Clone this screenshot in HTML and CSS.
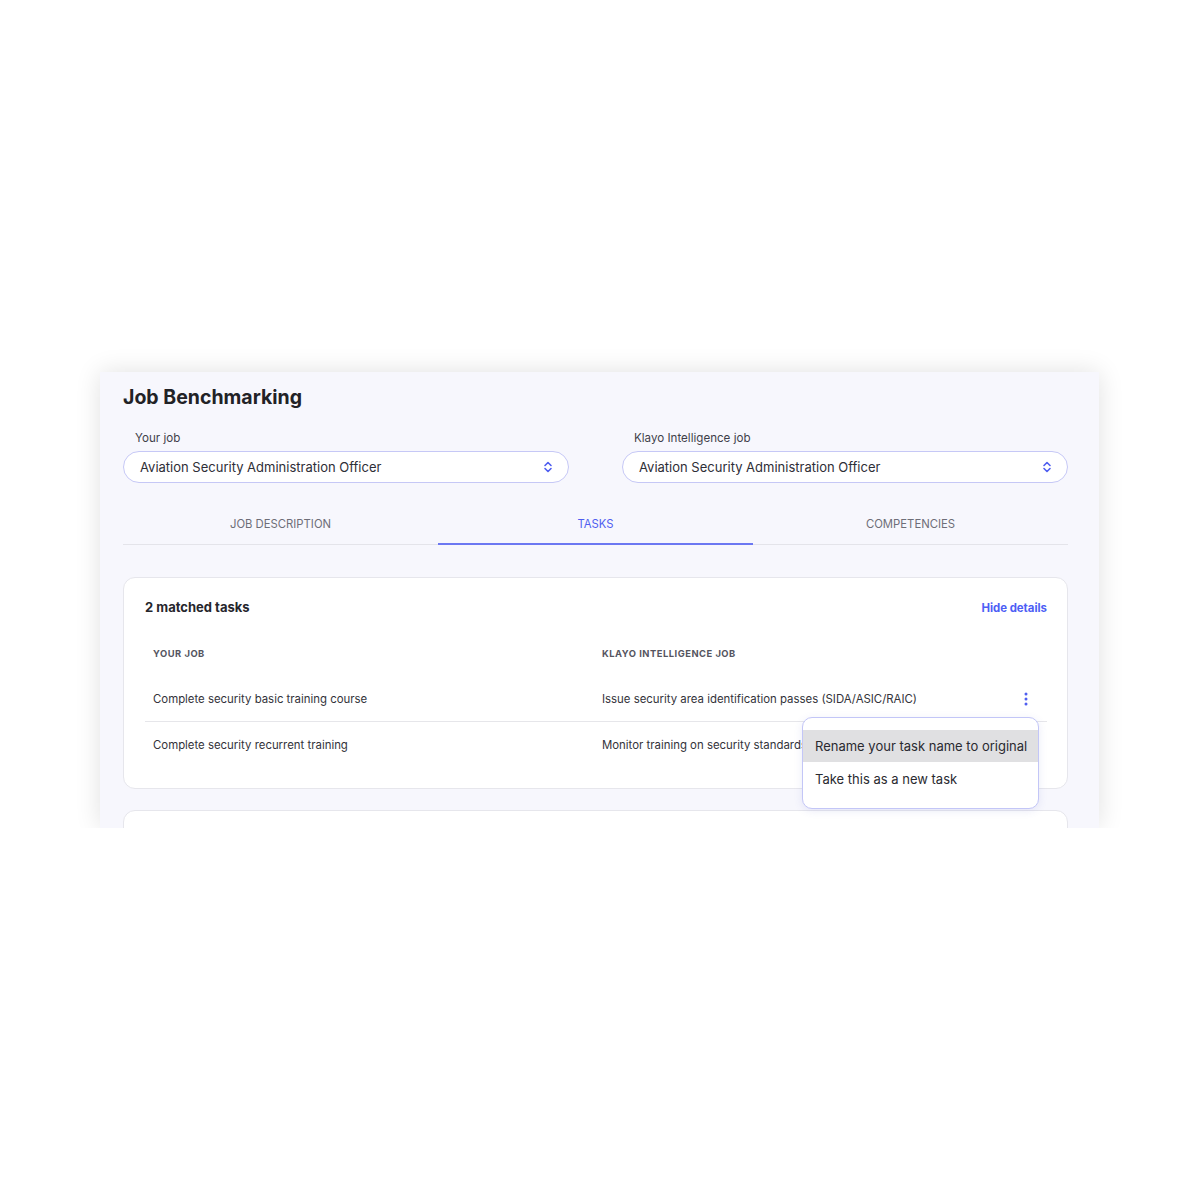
FILE: index.html
```html
<!DOCTYPE html>
<html lang="en">
<head>
<meta charset="utf-8">
<title>Job Benchmarking</title>
<link rel="stylesheet" href="styles.css">
</head>
<body>
<div class="panel">
  <h1 class="title">Job Benchmarking</h1>
  <div class="selects">
    <div class="field">
      <label class="field-label">Your job</label>
      <div class="select">
        <span>Aviation Security Administration Officer</span>
        <svg class="chev" width="10" height="12" viewBox="0 0 10 12"><path d="M2 4.5 L5 1.5 L8 4.5 M2 7.5 L5 10.5 L8 7.5" fill="none" stroke="#4f5ef0" stroke-width="1.6" stroke-linecap="round" stroke-linejoin="round"/></svg>
      </div>
    </div>
    <div class="field">
      <label class="field-label">Klayo Intelligence job</label>
      <div class="select">
        <span>Aviation Security Administration Officer</span>
        <svg class="chev" width="10" height="12" viewBox="0 0 10 12"><path d="M2 4.5 L5 1.5 L8 4.5 M2 7.5 L5 10.5 L8 7.5" fill="none" stroke="#4f5ef0" stroke-width="1.6" stroke-linecap="round" stroke-linejoin="round"/></svg>
      </div>
    </div>
  </div>
  <div class="tabs">
    <div class="tab">JOB DESCRIPTION</div>
    <div class="tab active">TASKS</div>
    <div class="tab">COMPETENCIES</div>
  </div>
  <div class="card">
    <div class="card-head">
      <span class="card-title">2 matched tasks</span>
      <span class="hide-link">Hide details</span>
    </div>
    <div class="table">
      <div class="row head">
        <div class="cell">YOUR JOB</div>
        <div class="cell">KLAYO INTELLIGENCE JOB</div>
      </div>
      <div class="row divided">
        <div class="cell">Complete security basic training course</div>
        <div class="cell cell-action">
          <span>Issue security area identification passes (SIDA/ASIC/RAIC)</span>
          <svg class="kebab" width="4" height="14" viewBox="0 0 4 14"><circle cx="2" cy="2" r="1.5" fill="#4f5ef0"/><circle cx="2" cy="7" r="1.5" fill="#4f5ef0"/><circle cx="2" cy="12" r="1.5" fill="#4f5ef0"/></svg>
        </div>
      </div>
      <div class="row">
        <div class="cell">Complete security recurrent training</div>
        <div class="cell">Monitor training on security standards</div>
      </div>
      <div class="menu">
        <div class="menu-item selected">Rename your task name to original</div>
        <div class="menu-item">Take this as a new task</div>
      </div>
    </div>
  </div>
  <div class="card card-next"></div>
</div>
</body>
</html>
```

FILE: styles.css
```css
* { box-sizing: border-box; }
html, body { margin: 0; padding: 0; background: #ffffff; }
body {
  font-family: Inter, "Noto Sans", "Liberation Sans", sans-serif;
  color: #2b2b33;
}
.panel {
  margin: 372px 0 0 100px;
  width: 999px;
  height: 456px;
  overflow: hidden;
  background: #f7f7fd;
  padding: 13px 31px 0 23px;
  box-shadow: 0 0 24px rgba(0, 0, 0, 0.12);
}
.title {
  margin: 0;
  font-size: 19.5px;
  line-height: 24px;
  font-weight: 700;
  color: #222226;
}
.selects {
  display: flex;
  gap: 53px;
  margin-top: 21px;
}
.field { flex: 1; }
.field-label {
  display: block;
  font-size: 11.6px;
  line-height: 16px;
  color: #3f3f4a;
  padding-left: 12px;
  margin-bottom: 5px;
}
.select {
  height: 32px;
  border: 1px solid #c6c8f6;
  border-radius: 16px;
  background: #ffffff;
  display: flex;
  align-items: center;
  justify-content: space-between;
  padding: 0 15px 0 16px;
  font-size: 13px;
  color: #2e2e36;
}
.chev { display: block; }
.tabs {
  display: flex;
  margin-top: 21px;
  box-shadow: inset 0 -1px 0 #e4e4ea;
}
.tab {
  flex: 1;
  text-align: center;
  font-size: 11.3px;
  line-height: 16px;
  padding: 12px 0 11px;
  color: #6e6e78;
  border-bottom: 2px solid transparent;
}
.tab.active {
  color: #4f5ef0;
  border-bottom-color: #6c78f2;
}
.card {
  margin-top: 32px;
  background: #ffffff;
  border: 1px solid #e6e6ec;
  border-radius: 12px;
  padding: 21px 20px 20px 21px;
}
.card-head {
  display: flex;
  justify-content: space-between;
  align-items: center;
}
.card-title {
  font-size: 13px;
  line-height: 16px;
  font-weight: 700;
  color: #26262c;
}
.hide-link {
  font-size: 11.4px;
  font-weight: 700;
  color: #4d5ef5;
  margin-top: 2px;
}
.table {
  position: relative;
  margin-top: 16px;
}
.row {
  display: grid;
  grid-template-columns: 449px 1fr;
  align-items: center;
  height: 46px;
}
.row.head { height: 45px; }
.row.divided { border-bottom: 1px solid #e6e6ea; }
.row:last-of-type .cell { padding-top: 2px; }
.cell {
  padding: 0 8px;
  font-size: 11.4px;
  color: #33333a;
  white-space: nowrap;
}
.row.head .cell {
  font-size: 9.4px;
  font-weight: 700;
  color: #55555f;
  letter-spacing: 0.5px;
}
.cell-action {
  display: flex;
  align-items: center;
  justify-content: space-between;
  padding-right: 19px;
}
.kebab { display: block; }
.menu {
  position: absolute;
  left: 657px;
  top: 86px;
  width: 237px;
  height: 92px;
  background: #ffffff;
  border: 1px solid #c3c6f7;
  border-radius: 10px;
  padding-top: 12px;
  box-shadow: 0 2px 8px rgba(80, 90, 200, 0.12);
}
.menu-item {
  height: 32px;
  line-height: 32px;
  padding-left: 12px;
  font-size: 13px;
  color: #2a2a30;
  white-space: nowrap;
}
.menu-item + .menu-item {
  height: 34px;
  line-height: 34px;
}
.menu-item.selected { background: #e0e0e2; }
.card-next {
  margin-top: 21px;
  height: 60px;
  padding: 0;
}
```
